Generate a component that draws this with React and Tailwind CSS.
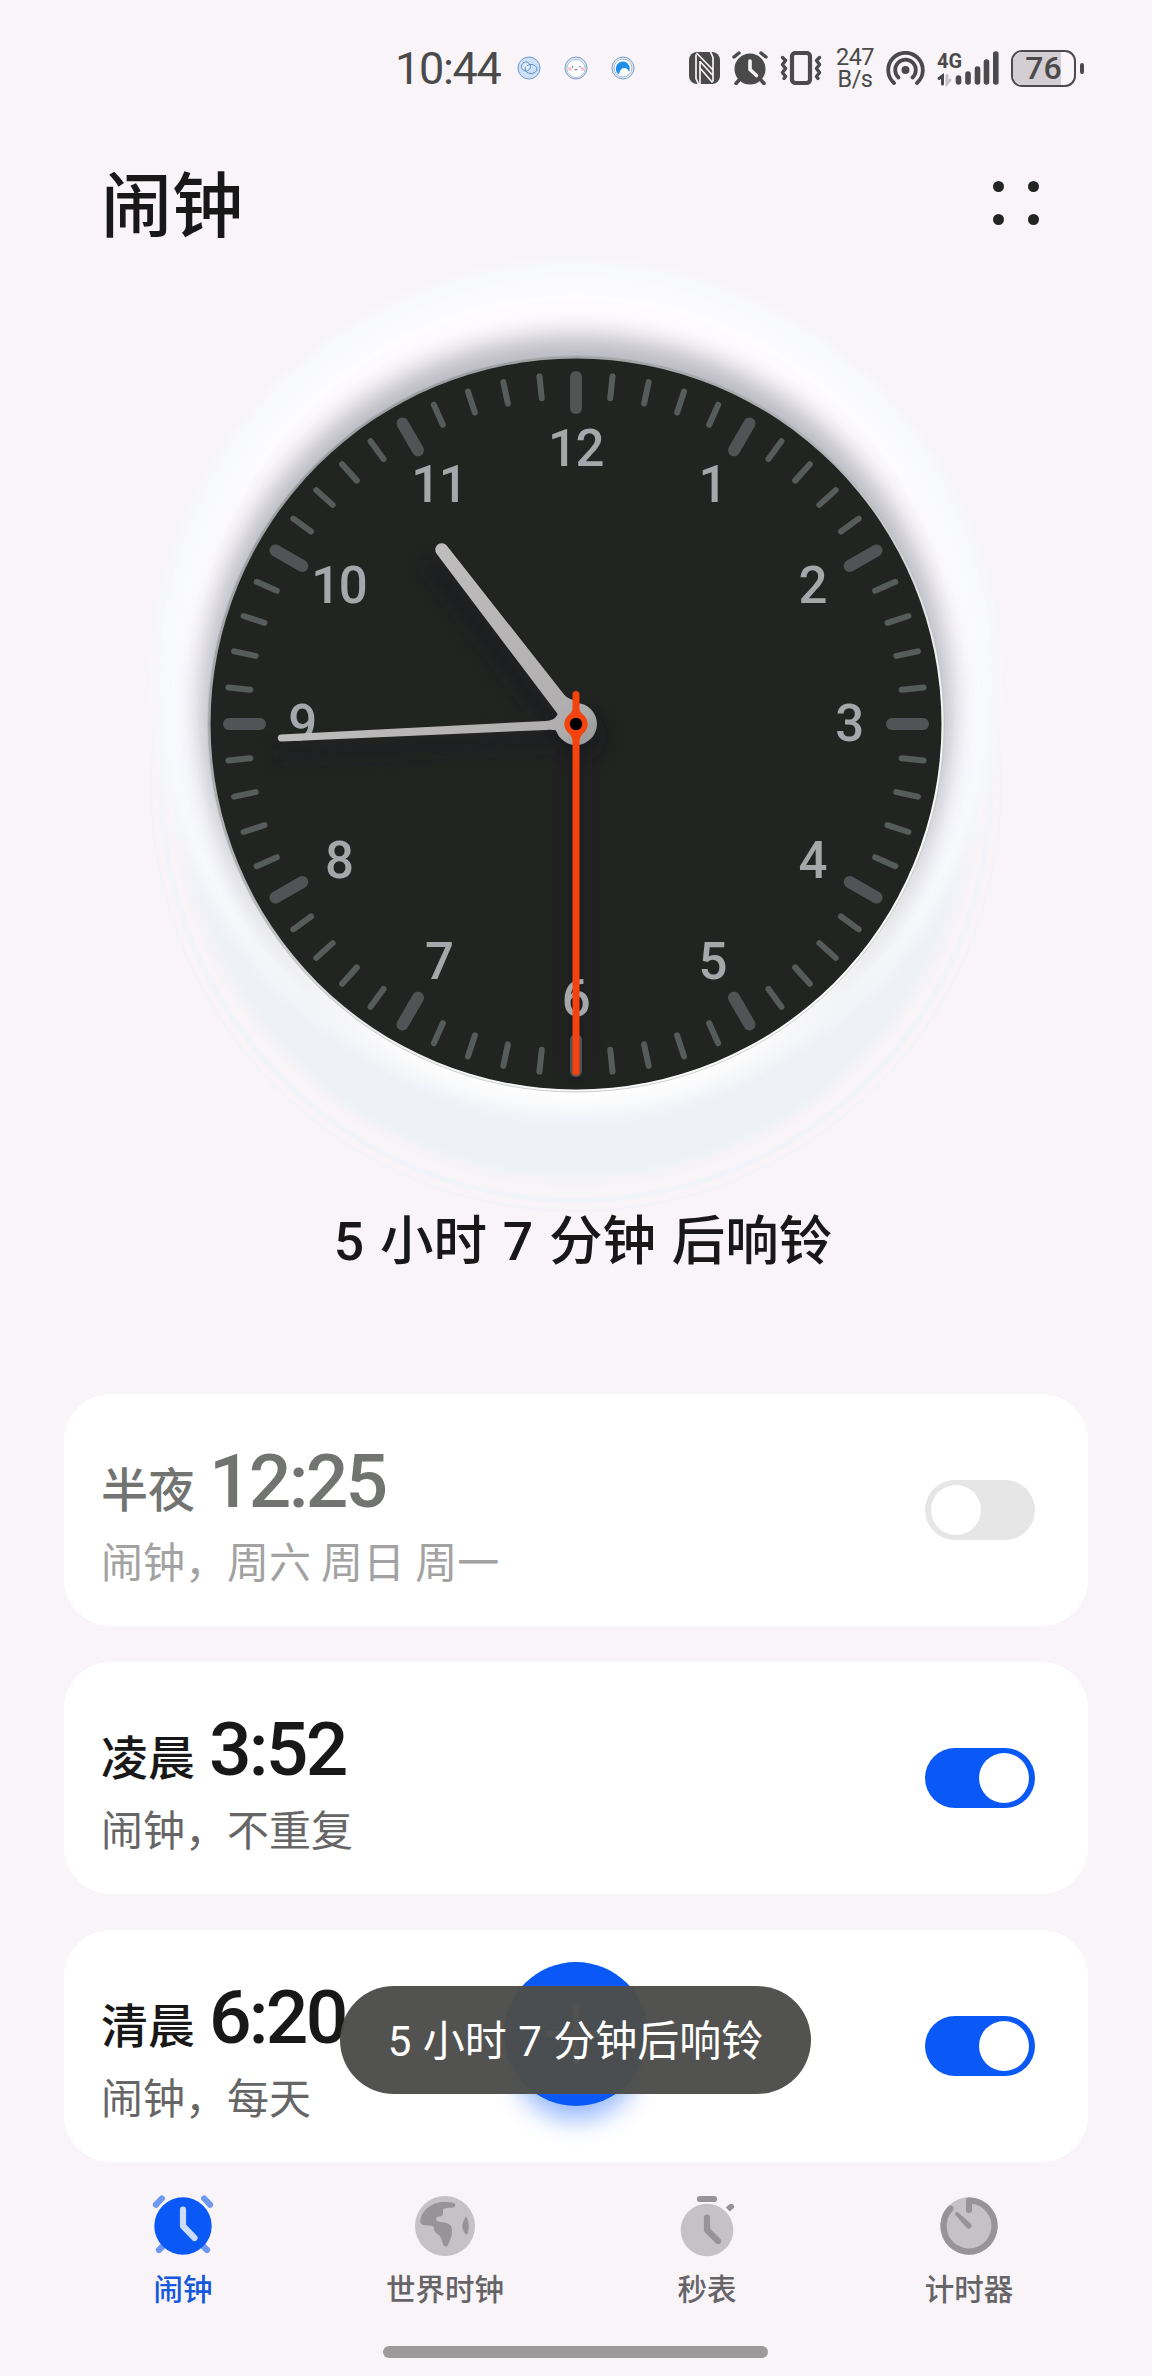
import { useState } from "react";

const CLOCK_CENTER = 368;
const CLOCK_NUMBERS = [12, 1, 2, 3, 4, 5, 6, 7, 8, 9, 10, 11];

const ALARMS = [
    {id: 1, period: "半夜", time: "12:25", repeat: "闹钟，周六 周日 周一", enabled: false},
    {id: 2, period: "凌晨", time: "3:52", repeat: "闹钟，不重复", enabled: true},
    {id: 3, period: "清晨", time: "6:20", repeat: "闹钟，每天", enabled: true},
];

/**
 * Small round notification icons shown next to the time.
 */
const NotificationIcons = () => (
    <div className="flex items-center gap-[23px]">
        <svg className="w-6 h-6" viewBox="0 0 24 24" fill="none">
            <circle cx="12" cy="12" r="11" fill="#cfe1f8" stroke="#6f9ac4" />
            <circle cx="9" cy="10.5" r="4.5" fill="#dcebfc" stroke="#5f8fbd" />
            <ellipse cx="14" cy="13" rx="6" ry="4.5" stroke="#5f8fbd" />
            <path d="M6.500 12c1-3 3-3 4 0" stroke="#fff" />
        </svg>
        <svg className="w-6 h-6" viewBox="0 0 24 24" fill="none">
            <circle cx="12" cy="12" r="11" fill="#dbe6f4" stroke="#7d9dc0" />
            <circle cx="12" cy="12.500" r="9" fill="#fff" stroke="#b5c8dd" />
            <circle cx="6" cy="13" r="1.800" fill="#f5bcc4" />
            <circle cx="18.500" cy="13" r="1.800" fill="#f5bcc4" />
            <path d="M8.500 10v1.500M16 10v1.500M10.500 13c.8 1.300 2.200 1.300 3 0" stroke="#4c5a72" />
        </svg>
        <svg className="w-6 h-6" viewBox="0 0 24 24" fill="none">
            <circle cx="12" cy="12" r="11" fill="#e8f1fb" stroke="#7d9dc0" />
            <circle cx="12" cy="12" r="9" fill="#fff" stroke="#9fb6d0" />
            <path d="M8 18.500C4 16 3.800 10 7.500 7s9.500-1.500 11 3.500c.5 2 .3 4-.5 5.500-.5-3-3-4.500-5.500-4S8.500 15 8 18.500z" fill="#1f8fe8" />
        </svg>
    </div>
);

const NfcIcon = () => (
    <svg className="w-[31px] h-8" viewBox="0 0 31 32">
        <rect width="31" height="32" rx="8" fill="#4a4a4a" />
        <path d="M7 2.500v24l2.500 5.500M24 29.500v-24L21.500 0M7.500 1L24 18M11 32V9M11 9.500L23.500 23M11 16l12.500 14.500" fill="none" stroke="#f7f3f7" strokeWidth="1.700" />
    </svg>
);

const StatusAlarmIcon = () => (
    <svg className="w-9 h-[34px]" viewBox="0 0 36 34" fill="none" strokeLinecap="round">
        <circle cx="18" cy="18" r="15.500" fill="#4a4a4a" />
        <path d="M2 6L7 2M34 6l-5-4M7 29l-3 3.500M29 29l3 3.500" stroke="#4a4a4a" strokeWidth="3.500" />
        <path d="M18 10v8.500l6.500 6" stroke="#f7f3f7" strokeWidth="3.600" />
    </svg>
);

const VibrateIcon = () => (
    <svg className="w-[42px] h-[34px]" viewBox="0 0 42 34" fill="none" stroke="#4a4a4a" strokeLinecap="round" strokeLinejoin="round">
        <rect x="12" y="2" width="18" height="30" rx="3.500" strokeWidth="4.200" />
        <path d="M2.500 6.500l3 3-3 4 3 4-3 4 3 4L4 27.500M39.500 6.500l-3 3 3 4-3 4 3 4-3 4 1.500 2" strokeWidth="3.400" />
    </svg>
);

const HotspotIcon = () => (
    <svg className="w-[39px] h-[34px]" viewBox="0 0 39 34" fill="none" stroke="#4a4a4a" strokeWidth="3.800" strokeLinecap="round">
        <path d="M8 32A17.300 17.300 0 1 1 31 32" />
        <path d="M12.500 26.500A10.300 10.300 0 1 1 26.500 26.500" />
        <circle cx="19.500" cy="19" r="4" fill="#4a4a4a" stroke="none" />
    </svg>
);

const SignalIcon = () => (
    <svg className="w-[62px] h-[42px] overflow-visible" viewBox="0 -3 62 42" fill="none" stroke="#4a4a4a" strokeLinecap="round">
        <text x="0" y="18" className="font-['Roboto'] font-bold text-[21px]" fill="#4a4a4a" stroke="none" textLength="25" lengthAdjust="spacingAndGlyphs">4G</text>
        <path d="M2 28.500L5.500 26v8" strokeWidth="3" />
        <path d="M10 25.500v8l3-3.500" stroke="#c2c6c8" strokeWidth="3" />
        <path d="M21.500 28v4M31 24v8M40.500 19v13M49.500 12v20M58.800 4v28" strokeWidth="5.600" />
    </svg>
);

const StatusBar = () => (
    <div className="h-[136px] pl-[395px] pt-[47px] flex items-start text-[#4a4a4a]">
        <div className="flex items-center h-[42px] w-full">
            <span className="font-['Roboto'] text-[45px] leading-none tracking-[-1.3px] w-[107px] whitespace-nowrap">10:44</span>
            <div className="ml-[15px]"><NotificationIcons /></div>
            <div className="flex items-center ml-[54px]">
                <NfcIcon />
                <div className="ml-3"><StatusAlarmIcon /></div>
                <div className="ml-3"><VibrateIcon /></div>
                <div className="ml-[13px] w-[40px] font-['Roboto'] text-[23.5px] leading-[22px] tracking-[-0.5px] text-center">
                    247<br />B/s
                </div>
                <div className="ml-[11px]"><HotspotIcon /></div>
                <div className="ml-3"><SignalIcon /></div>
                <div className="ml-3 relative w-[65px] h-[37px] rounded-[11px] border-[2.5px] border-[#4a4a4a] overflow-hidden flex items-center justify-center">
                    <div className="absolute left-0 top-0 h-full w-[48px] bg-[#d2ced2]" />
                    <span className="relative font-['Roboto'] font-medium text-[32px] leading-none">76</span>
                </div>
                <div className="ml-1 w-1 h-[11px] rounded-full bg-[#4a4a4a]" />
            </div>
        </div>
    </div>
);

const Header = () => (
    <header className="h-[132px] pl-[101px] pr-[113px] flex items-center justify-between">
        <h1 className="text-[71px] leading-none font-medium text-[#181818] pb-1">闹钟</h1>
        <button className="grid grid-cols-2 gap-x-6 gap-y-[22px] pt-0.5" aria-label="更多">
            {[0, 1, 2, 3].map((dot) => <span key={dot} className="w-[11px] h-[11px] rounded-full bg-[#232523]" />)}
        </button>
    </header>
);

/**
 * Analog clock face with sixty ticks, twelve numbers and three hands.
 */
const ClockFace = () =>
{
    const ticks = Array.from({length: 60}, (_, i) => i);

    return (
        <div className="w-[736px] h-[736px] rounded-full shadow-[0_40px_22px_-22px_#ffffff,0_-13px_26px_8px_#bbbac3,0_-44px_40px_26px_#fffcff,0_-40px_24px_42px_#f7faff,0_-42px_14px_56px_#f7f7f9,0_56px_10px_32px_#eef2f7,0_62px_0_44px_#f8f4f8,0_62px_0_49px_#f1f4f9,0_62px_0_56px_#f8f4f8,0_62px_0_58px_#f2f4f9]">
            <svg className="w-full h-full overflow-visible" viewBox="0 0 736 736">
                <defs>
                    <linearGradient id="rim" x1="0.1" y1="0" x2="0.8" y2="1">
                        <stop offset="0" stopColor="#96989b" />
                        <stop offset="0.45" stopColor="#b4b5b8" />
                        <stop offset="0.7" stopColor="#f2f2f4" />
                        <stop offset="1" stopColor="#ffffff" />
                    </linearGradient>
                    <linearGradient id="hand" x1="0" y1="0" x2="0" y2="1">
                        <stop offset="0" stopColor="#bfbcbe" />
                        <stop offset="1" stopColor="#b0adaf" />
                    </linearGradient>
                    <linearGradient id="hub" x1="0" y1="0" x2="1" y2="1">
                        <stop offset="0" stopColor="#b2afb1" />
                        <stop offset="0.5" stopColor="#acabac" />
                        <stop offset="1" stopColor="#929292" />
                    </linearGradient>
                    <filter id="soft" x="-50%" y="-50%" width="200%" height="200%">
                        <feGaussianBlur stdDeviation="9" />
                    </filter>
                </defs>
                <circle cx="368" cy="368" r="368" fill="url(#rim)" stroke="#8f9094" strokeOpacity="0.5" strokeWidth="0.8" />
                <circle cx="368" cy="368" r="365.500" fill="#222422" />
                <g filter="url(#soft)" opacity="0.4" stroke="#15181c" strokeLinecap="round">
                    <line x1="358" y1="386" x2="225" y2="212" strokeWidth="18" />
                    <line x1="366" y1="384" x2="74" y2="398" strokeWidth="14" />
                    <line x1="368" y1="368" x2="368" y2="712" strokeWidth="20" />
                    <circle cx="372" cy="380" r="26" fill="#0c0f12" stroke="none" />
                </g>
                {ticks.map((i) => (
                    <line
                        key={i}
                        x1="368"
                        x2="368"
                        y1={i % 5 === 0 ? 21 : 18.500}
                        y2={i % 5 === 0 ? 52 : 40.500}
                        stroke={i % 5 === 0 ? "#505456" : "#565b5c"}
                        strokeWidth={i % 5 === 0 ? 12 : 6}
                        strokeLinecap="round"
                        transform={`rotate(${i * 6} ${CLOCK_CENTER} ${CLOCK_CENTER})`}
                    />
                ))}
                {CLOCK_NUMBERS.map((n, i) => (
                    <text
                        key={n}
                        x={CLOCK_CENTER - 0.5 + 273.5 * Math.sin(i * Math.PI / 6)}
                        y={CLOCK_CENTER + 16.500 - 275 * Math.cos(i * Math.PI / 6)}
                        textAnchor="middle"
                        fill="#a4a8aa"
                        className="font-['Roboto'] font-medium text-[51px] tracking-[-1.5px]"
                    >
                        {n}
                    </text>
                ))}
                <path d="M-8.500 -15L-6.500 -220a6.500 6.500 0 0 1 13 0L8.500 -30Q9 -24 14 -19L0 0z" fill="url(#hand)" transform="translate(368 368) rotate(-37.600)" />
                <path d="M-6 -20Q-4.500 -22 -4.500 -30L-3.500 -295a3.500 3.500 0 0 1 7 0L4.500 -30Q4.500 -22 9 -19L0 0z" fill="url(#hand)" transform="translate(368 368) rotate(-92.700)" />
                <circle cx="368" cy="368" r="21" fill="url(#hub)" />
                <path d="M364.500 338.500a3.500 3.500 0 0 1 7 0V352Q371.500 356 375 358.500A12 12 0 0 1 375 377.500Q371.500 381 371.500 386V716a3.500 3.500 0 0 1 -7 0V386Q364.500 381 361 377.500A12 12 0 0 1 361 358.500Q364.500 356 364.500 352z" fill="#f4430e" />
                <circle cx="368" cy="368" r="6.200" fill="#000" />
            </svg>
        </div>
    );
};

const Toggle = ({checked, onChange}) => (
    <button
        role="switch"
        aria-checked={checked}
        onClick={onChange}
        className={`w-[110px] h-[60px] rounded-full px-1.5 flex items-center ${checked ? "bg-[#0a59f7] justify-end" : "bg-[#e6e6e6] justify-start"}`}
    >
        <span className="w-[50px] h-[50px] rounded-full bg-white" />
    </button>
);

const AlarmCard = ({alarm, onToggle}) => (
    <div className="h-[232px] rounded-[47px] bg-white pl-[37px] pr-[53px] flex items-center justify-between">
        <div className="pt-[9px]">
            <div className={`flex items-baseline gap-3.5 h-[84px] ${alarm.enabled ? "text-[#181818]" : "text-[#727472]"}`}>
                <span className="text-[47px] leading-[84px] font-medium">{alarm.period}</span>
                <span className="font-['Roboto'] font-medium text-[75px] leading-[84px] tracking-[-2.8px]">{alarm.time}</span>
            </div>
            <div className={`text-[42px] leading-[60px] mt-[7px] [word-spacing:0.7px] ${alarm.enabled ? "text-[#666666]" : "text-[#a3a2a3]"}`}>{alarm.repeat}</div>
        </div>
        <Toggle checked={alarm.enabled} onChange={onToggle} />
    </div>
);

const AlarmTabIcon = () => (
    <svg className="w-16 h-16" viewBox="0 0 64 64" fill="none" strokeWidth="6.200" strokeLinecap="round" strokeLinejoin="round">
        <path d="M5 10.700l5.800-6.200M59 10.700l-5.800-6.200M8 56l6-6M56 56l-6-6" stroke="#6f98f2" />
        <circle cx="32" cy="32" r="28.700" fill="#0a59f7" />
        <path d="M32 15.500V32l11.500 12" stroke="#cbdcfc" />
    </svg>
);

const WorldTabIcon = () => (
    <svg className="w-16 h-16" viewBox="0 0 64 64">
        <circle cx="32" cy="32" r="30" fill="#c4c2c5" />
        <path d="M7.200 28C8 17 18 8 31 8c4 0 8 0 10 1 2 1 2 4-1 4.500l-6 .5c-3 0-4 1-4 3 0 4 0 5-3 5.500-3 0-4 1-4 2.500 0 2 2 2.500 4 3 2 .5 3 0 6 1 4 1 6 3 6 8 0 5-2 10-4 14-1 2-4 2-5-1l-2-6c-2-4-7-5-7-9 0-3-1-3-5-3.500-5 0-9-1-8.800-4z" fill="#969496" />
        <path d="M53 22.500c1 0 2.800 6 2.800 10 0 3-1 8-2 8-1.500 0-4.500-4-4.500-8 0-4 2.500-9 3.700-10z" fill="#969496" />
    </svg>
);

const StopwatchTabIcon = () => (
    <svg className="w-16 h-16" viewBox="0 0 64 64" fill="none" stroke="#969496" strokeWidth="6.200" strokeLinecap="round" strokeLinejoin="round">
        <circle cx="32" cy="36" r="26.300" fill="#c4c2c5" stroke="none" />
        <path d="M25 5h14M32 23.500V36l11 11" />
        <path d="M50.800 13.500l4-3.500a3 3 0 0 1 4 4l-4 3.500z" fill="#969496" stroke="none" />
    </svg>
);

const TimerTabIcon = () => (
    <svg className="w-16 h-16" viewBox="0 0 64 64" fill="none" stroke="#969496" strokeWidth="6.200" strokeLinecap="round" strokeLinejoin="round">
        <circle cx="32" cy="32" r="28.700" fill="#c4c2c5" stroke="none" />
        <path d="M32 16V6.500A25.500 25.500 0 1 1 13.500 14.500" />
        <path d="M18.300 20.800a1.800 1.800 0 0 1 2.500-2.500L34 29.800a3 3 0 0 1-4.200 4.200z" fill="#969496" stroke="none" />
    </svg>
);

const TABS = [
    {label: "闹钟", Icon: AlarmTabIcon, active: true},
    {label: "世界时钟", Icon: WorldTabIcon, active: false},
    {label: "秒表", Icon: StopwatchTabIcon, active: false},
    {label: "计时器", Icon: TimerTabIcon, active: false},
];

const BottomNavigation = () => (
    <nav className="grid grid-cols-4 px-[52px] pt-8">
        {TABS.map(({label, Icon, active}) => (
            <a key={label} className="flex flex-col items-center">
                <Icon />
                <span className={`mt-[13px] text-[29.5px] leading-[32px] font-medium ${active ? "text-[#1458dc]" : "text-[#666466]"}`}>{label}</span>
            </a>
        ))}
    </nav>
);

const App = () =>
{
    const [alarms, setAlarms] = useState(ALARMS);

    const toggleAlarm = (id) =>
    {
        setAlarms(alarms.map((a) => a.id === id ? {...a, enabled: !a.enabled} : a));
    };

    return (
        <div className="relative w-[1152px] h-[2376px] overflow-hidden bg-[#f8f4f8] font-['Noto_Sans_CJK_SC',sans-serif]">
            <StatusBar />
            <Header />
            <main>
                <div className="flex justify-center pt-[88px]">
                    <ClockFace />
                </div>
                <div className="relative h-[302px] pt-[112px] pl-[14px] text-center font-['Roboto','Noto_Sans_CJK_SC',sans-serif] text-[53.5px] leading-[76px] font-medium [word-spacing:2.5px] text-[#181818] whitespace-pre">
                    5 小时 7 分钟 后响铃
                </div>
                <div className="px-16 flex flex-col gap-9">
                    {alarms.map((alarm) => (
                        <AlarmCard key={alarm.id} alarm={alarm} onToggle={() => toggleAlarm(alarm.id)} />
                    ))}
                </div>
            </main>
            <BottomNavigation />

            {/* Add button, with the toast above it */}
            <button aria-label="添加" className="absolute left-[504px] top-[1962px] w-36 h-36 rounded-full bg-[#0a59f7] flex items-center justify-center shadow-[0_22px_24px_-8px_rgba(10,89,247,0.42)]">
                <svg className="w-[60px] h-[60px]" viewBox="0 0 60 60" stroke="#fff" strokeWidth="6" strokeLinecap="round">
                    <path d="M30 3v54M3 30h54" />
                </svg>
            </button>
            <div className="absolute left-[340px] top-[1986px] w-[471px] h-[108px] pt-[3px] rounded-full bg-[rgba(76,77,74,0.967)] flex items-center justify-center text-white font-['Roboto','Noto_Sans_CJK_SC',sans-serif] text-[42px] leading-none [word-spacing:1px] whitespace-nowrap">
                5 小时 7 分钟后响铃
            </div>
            <div className="absolute left-[383px] top-[2346px] w-[385px] h-3 rounded-full bg-[#9c999b]" />
        </div>
    );
};

export default App;
